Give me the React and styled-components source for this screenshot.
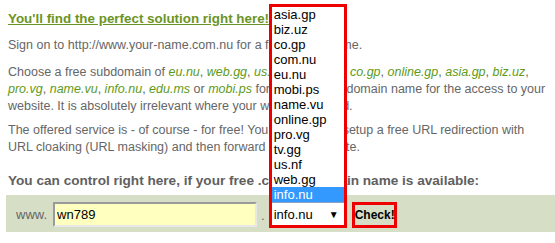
import React from "react";
import styled, { createGlobalStyle } from "styled-components";

const GlobalStyle = createGlobalStyle`
  body {
    margin: 0;
    background: #ffffff;
    font-family: "Liberation Sans", Arial, sans-serif;
  }
`;

const Page = styled.div`
  width: 555px;
  height: 243px;
  overflow: hidden;
  padding-top: 10px;
  box-sizing: border-box;
`;

const Heading = styled.h2`
  margin: 0 0 0 8px;
  font-size: 13.4px;
  line-height: 18px;
  font-weight: bold;
  color: #6b9424;
  text-decoration: underline;
`;

const Text = styled.p`
  margin: ${(p) => p.$top || 9}px 0 0 8px;
  font-size: 12.5px;
  line-height: 17px;
  color: #666666;
  white-space: nowrap;
`;

const Domain = styled.i`
  color: #5e9a1a;
`;

// words that sit under the open list, spaced to line up the visible rest
const Covered = styled.span`
  letter-spacing: ${(p) => p.$spacing}px;
`;

const Question = styled.p`
  margin: 16px 0 0 8px;
  font-size: 13.6px;
  line-height: 18px;
  font-weight: bold;
  color: #606060;
  white-space: nowrap;
`;

const Bar = styled.form`
  margin: 5px 0 0 6px;
  height: 37px;
  background: #d6dec6;
  display: flex;
  align-items: center;
  padding-left: 10px;
  font-size: 13px;
  color: #666666;
`;

const Prefix = styled.span`
  margin-right: 6px;
  padding-top: 1px;
`;

const NameInput = styled.input`
  width: 204px;
  height: 25px;
  box-sizing: border-box;
  margin: 1px 0 0 0;
  padding: 0 2px;
  background: #ffffc0;
  border: 2px solid;
  border-color: #9a9a9a #e8e8e8 #e8e8e8 #9a9a9a;
  font-family: "Liberation Sans", Arial, sans-serif;
  font-size: 13px;
  color: #000;
  outline: none;
`;

const Dot = styled.span`
  margin: 3px 4px 0 4px;
`;

const SelectWrap = styled.div`
  position: relative;
  width: 78px;
  height: 26px;
  margin-top: 3px;
  box-sizing: border-box;
  border: 3px solid #ee0000;
  border-top: none;
  background: #ffffff;
`;

const SelectField = styled.div`
  height: 100%;
  box-sizing: border-box;
  border-top: 1px solid #8aa0c0;
  display: flex;
  align-items: center;
  justify-content: space-between;
  padding: 0 5px 0 2px;
  font-size: 13px;
  color: #000;
`;

const Arrow = styled.span`
  font-size: 10px;
`;

const List = styled.ul`
  position: absolute;
  left: -3px;
  right: -3px;
  bottom: 100%;
  margin: 0;
  padding: 0;
  list-style: none;
  background: #ffffff;
  border: 3px solid #ee0000;
  border-bottom: none;
`;

const Item = styled.li`
  height: 15px;
  line-height: 15px;
  padding-left: 2px;
  font-size: 13px;
  color: ${(p) => (p.$active ? "#ffffff" : "#000000")};
  background: ${(p) => (p.$active ? "#3399ff" : "transparent")};
`;

const CheckButton = styled.button`
  margin: 2px 0 0 5px;
  width: 45px;
  height: 26px;
  box-sizing: border-box;
  border: 3px solid #ee0000;
  background: transparent;
  padding: 0;
  font-family: "Liberation Sans", Arial, sans-serif;
  font-size: 12px;
  font-weight: bold;
  color: #000;
`;

const domains = [
  "asia.gp",
  "biz.uz",
  "co.gp",
  "com.nu",
  "eu.nu",
  "mobi.ps",
  "name.vu",
  "online.gp",
  "pro.vg",
  "tv.gg",
  "us.nf",
  "web.gg",
  "info.nu",
];

const pad = (n) => "\u00a0".repeat(n);

export default function App() {
  const selected = "info.nu";
  return (
    <Page>
      <GlobalStyle />
      <Heading>You'll find the perfect solution right here!</Heading>
      <Text $top={9}>
        Sign on to http://www.your-name.com.nu for a fr
        <Covered $spacing={-0.6}>ee domain na</Covered>me.
      </Text>
      <Text $top={10}>
        Choose a free subdomain of <Domain>eu.nu</Domain>, <Domain>web.gg</Domain>,{" "}
        <Domain>us.nf</Domain>, <Domain>com.nu</Domain>,{pad(4)}{" "}
        <Domain>co.gp</Domain>, <Domain>online.gp</Domain>, <Domain>asia.gp</Domain>,{" "}
        <Domain>biz.uz</Domain>,
        <br />
        <Domain>pro.vg</Domain>, <Domain>name.vu</Domain>, <Domain>info.nu</Domain>,{" "}
        <Domain>edu.ms</Domain> or <Domain>mobi.ps</Domain> for an individual domain
        name for the access to your
        <br />
        website. It is absolutely irrelevant where your we
        <Covered $spacing={-0.5}>bsite is hoste</Covered>d.
      </Text>
      <Text $top={7}>
        The offered service is - of course - for free! You can likewise setup a free URL
        redirection with
        <br />
        URL cloaking (URL masking) and then forward
        <Covered $spacing={-0.4}> it to your webs</Covered>ite.
      </Text>
      <Question>
        You can control right here, if your free .c
        <Covered $spacing={-0.3}>om.nu doma</Covered>in name is available:
      </Question>
      <Bar onSubmit={(e) => e.preventDefault()}>
        <Prefix>www.</Prefix>
        <NameInput defaultValue="wn789" />
        <Dot>.</Dot>
        <SelectWrap>
          <List>
            {domains.map((d) => (
              <Item key={d} $active={d === selected}>
                {d}
              </Item>
            ))}
          </List>
          <SelectField>
            <span>{selected}</span>
            <Arrow>▼</Arrow>
          </SelectField>
        </SelectWrap>
        <CheckButton type="submit">Check!</CheckButton>
      </Bar>
    </Page>
  );
}
